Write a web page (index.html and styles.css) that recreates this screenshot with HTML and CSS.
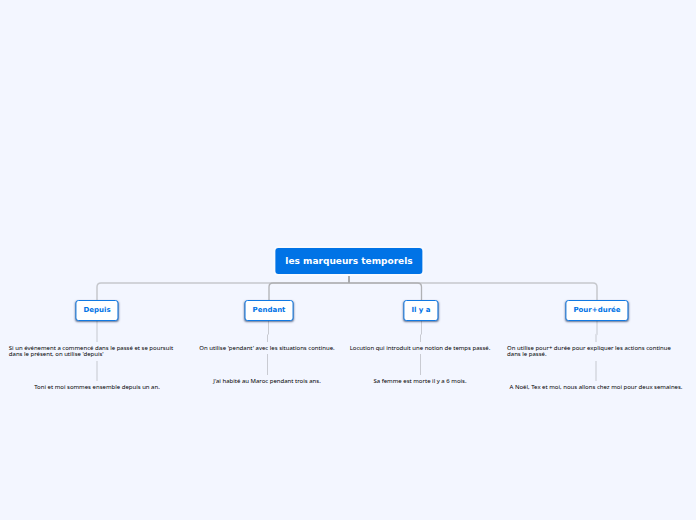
FILE: index.html
```html
<!DOCTYPE html>
<html lang="fr">

<head>
    <meta charset="UTF-8">
    <meta name="viewport" content="width=device-width, initial-scale=1.0">
    <title>les marqueurs temporels</title>
    <link rel="stylesheet" href="styles.css">
</head>

<body>
    <main class="mindmap">
        <div class="canvas">
            <svg class="links" width="696" height="520" viewBox="0 0 696 520" fill="none" aria-hidden="true">
                <!-- root to branches -->
                <g stroke="#c6c8cd" stroke-width="1.5">
                    <path d="M349 275V283H101Q97 283 97 287V300" />
                    <path d="M349 283H593Q597 283 597 287V300" />
                </g>
                <g stroke="#b0b1b4" stroke-width="1.3">
                    <path d="M349 283H273Q269 283 269 287V300" />
                    <path d="M349 283H417.500Q421.500 283 421.500 287V300" />
                </g>
                <path d="M349 275V283" stroke="#a9aaad" stroke-width="2" />
                <!-- branches to notes -->
                <g stroke="#dcdfe7" stroke-width="2">
                    <path d="M97 321V342M97 361V381" />
                    <path d="M597 321V334L596 335V342M596 361V381" />
                </g>
                <g stroke="#c9cbd2">
                    <path d="M268.500 321V334L267.500 335V342M267.500 354V375" />
                    <path d="M421.500 321V334L420.500 335V342M420.500 354V375" />
                </g>
            </svg>

            <h1 class="node root">les marqueurs temporels</h1>

            <h2 class="node branch depuis">Depuis</h2>
            <p class="node note depuis-rule">Si un événement a commencé dans le passé et se poursuit<br>dans le présent, on utilise 'depuis'</p>
            <p class="node note depuis-example">Toni et moi sommes ensemble depuis un an.</p>

            <h2 class="node branch pendant">Pendant</h2>
            <p class="node note pendant-rule">On utilise 'pendant' avec les situations continue.</p>
            <p class="node note pendant-example">J'ai habité au Maroc pendant trois ans.</p>

            <h2 class="node branch ilya">Il y a</h2>
            <p class="node note ilya-rule">Locution qui introduit une notion de temps passé.</p>
            <p class="node note ilya-example">Sa femme est morte il y a 6 mois.</p>

            <h2 class="node branch pour">Pour+durée</h2>
            <p class="node note pour-rule">On utilise pour+ durée pour expliquer les actions continue<br>dans le passé.</p>
            <p class="node note pour-example">A Noël, Tex et moi, nous allons chez moi pour deux semaines.</p>
        </div>
    </main>
</body>

</html>
```
FILE: styles.css
```css
* {
    margin: 0;
    padding: 0;
    box-sizing: border-box;
}

body {
    font-family: "DejaVu Sans", Verdana, sans-serif;
    background-color: #f3f6ff;
}

.mindmap {
    min-height: 100vh;
    display: flex;
    justify-content: center;
    align-items: center;
}

.canvas {
    position: relative;
    flex: none;
    width: 696px;
    height: 520px;
}

.links {
    display: block;
}

.node {
    position: absolute;
    white-space: nowrap;
    transform: translateX(-50%);
}

.root {
    left: 349px;
    top: 248px;
    padding: 0 10px;
    border-radius: 3px;
    background-color: #0073e6;
    box-shadow: 0 0 0 2px #f8faff;
    color: white;
    font-size: 9px;
    line-height: 26px;
}

.branch {
    top: 300px;
    padding: 0 7px;
    border: 1px solid #1179e2;
    border-radius: 3px;
    background-color: white;
    box-shadow: 0 1px 2px rgba(0, 30, 80, 0.6);
    color: #0073e6;
    font-size: 7px;
    line-height: 19px;
}

.note {
    color: #000;
    font-family: "Noto Sans", sans-serif;
    font-size: 6px;
    line-height: 6px;
}

/* Node positions on the map */
.depuis {
    left: 97px;
}

.pendant {
    left: 269px;
}

.ilya {
    left: 421px;
}

.pour {
    left: 597px;
}

.depuis-rule {
    left: 91px;
    top: 345px;
}

.depuis-example {
    left: 97px;
    top: 384px;
}

.pendant-rule {
    left: 267px;
    top: 345px;
}

.pendant-example {
    left: 267px;
    top: 378px;
}

.ilya-rule {
    left: 420px;
    top: 345px;
}

.ilya-example {
    left: 420px;
    top: 378px;
}

.pour-rule {
    left: 589px;
    top: 345px;
}

.pour-example {
    left: 596px;
    top: 384px;
}
```
